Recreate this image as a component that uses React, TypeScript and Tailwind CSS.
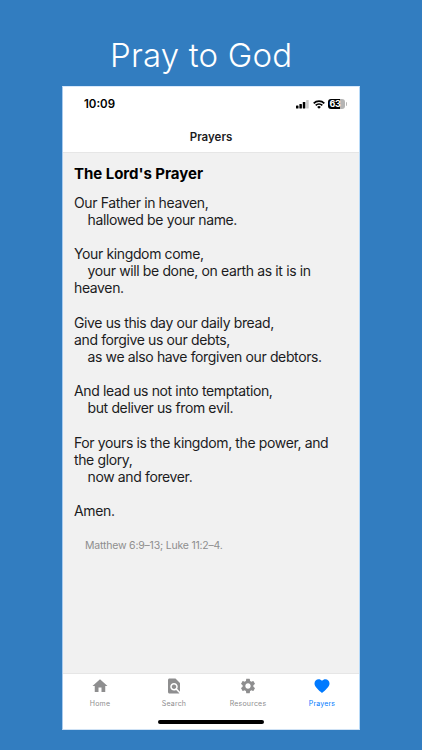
import React from "react"
import { MdHome, MdFindInPage, MdSettings, MdFavorite } from "react-icons/md"

interface Line {
  text: string
  indent?: boolean
}

const stanzas: Line[][] = [
  [{ text: "Our Father in heaven," }, { text: "hallowed be your name.", indent: true }],
  [
    { text: "Your kingdom come," },
    { text: "your will be done, on earth as it is in", indent: true },
    { text: "heaven." },
  ],
  [
    { text: "Give us this day our daily bread," },
    { text: "and forgive us our debts," },
    { text: "as we also have forgiven our debtors.", indent: true },
  ],
  [{ text: "And lead us not into temptation," }, { text: "but deliver us from evil.", indent: true }],
  [
    { text: "For yours is the kingdom, the power, and" },
    { text: "the glory," },
    { text: "now and forever.", indent: true },
  ],
  [{ text: "Amen." }],
]

const tabs = [
  { label: "Home", icon: MdHome },
  { label: "Search", icon: MdFindInPage },
  { label: "Resources", icon: MdSettings },
  { label: "Prayers", icon: MdFavorite, active: true },
]

function StatusBar() {
  return (
    <div className="flex h-[34px] items-center justify-between pl-[21px] pr-[12px]">
      <span className="text-[11.5px] font-semibold leading-4 text-black">10:09</span>
      <div className="flex items-center">
        <svg width="13" height="9" viewBox="0 0 13 9" className="mr-[4px]">
          <rect x="0" y="5.5" width="2.5" height="3" rx="0.6" />
          <rect x="3.4" y="4" width="2.5" height="4.5" rx="0.6" />
          <rect x="6.8" y="2" width="2.5" height="6.5" rx="0.6" />
          <rect x="10.2" y="0" width="2.5" height="8.5" rx="0.6" fill="#c9c9c9" />
        </svg>
        <svg width="12" height="9" viewBox="0 0 12 9" className="mr-[3px]" fill="none" stroke="#000" strokeWidth="1.7">
          <path d="M0.7 3.3a7.4 7.4 0 0 1 10.6 0" />
          <path d="M2.7 5.4a4.6 4.6 0 0 1 6.6 0" />
          <path d="M6 8.8 4.1 6.9a2.7 2.7 0 0 1 3.8 0z" fill="#000" stroke="none" />
        </svg>
        <div className="flex h-[10px] w-[17px] items-center rounded-[3px] bg-linear-to-r from-black from-68% to-[#b5b5b5] to-68% pl-[2px] text-[9px] font-bold leading-[10px] tracking-[-0.3px] text-white">
          63
        </div>
        <div className="ml-px h-[4px] w-[1.5px] rounded-r-full bg-[#b5b5b5]" />
      </div>
    </div>
  )
}

export default function App() {
  return (
    <div className="flex h-[750px] w-[422px] flex-col overflow-hidden bg-[#327dc0] font-['Inter',sans-serif]">
      <h1 className="h-[86px] pl-[110px] pt-[35px] text-[33px] font-light leading-[40px] tracking-[0.2px] whitespace-nowrap text-white">
        Pray to God
      </h1>

      <div className="ml-[62px] flex h-[644px] w-[298px] flex-col border border-t-[#d8e9fb] border-r-[#b8daf8] border-b-[#cfe2f5] border-l-[#a9cbee] bg-white">
        <StatusBar />
        <header className="flex h-[32px] items-center justify-center border-b border-[#e6e6e6] text-[11.5px] font-semibold leading-4 text-[#1c1c1e]">
          Prayers
        </header>

        <main className="flex-1 bg-[#f1f1f1] pl-[11px] pt-[11px]">
          <h2 className="mb-[9.5px] text-[15px] font-bold leading-5 tracking-[-0.03px] text-black">The Lord's Prayer</h2>
          <div className="space-y-[17.15px] whitespace-nowrap text-[14px] leading-[17.15px] tracking-[-0.37px] text-[#1c1c1e]">
            {stanzas.map((lines, i) => (
              <div key={i}>
                {lines.map((line) => (
                  <p key={line.text} className={line.indent ? "pl-[13.5px]" : ""}>
                    {line.text}
                  </p>
                ))}
              </div>
            ))}
          </div>
          <p className="mt-[18.5px] pl-[11px] text-[10.5px] leading-4 tracking-[-0.2px] text-[#8e8e8e]">
            Matthew 6:9–13; Luke 11:2–4.
          </p>
        </main>

        <nav className="h-[56px] border-t border-[#e6e6e6]">
          <div className="grid h-[44px] grid-cols-4">
            {tabs.map(({ label, icon: Icon, active }) => (
              <div
                key={label}
                className={`flex flex-col items-center pt-[3px] ${active ? "text-[#007aff]" : "text-[#8e8e8f]"}`}
              >
                <Icon size={18} />
                <span className="mt-[4px] text-[7px] leading-[10px] tracking-[0.2px]">{label}</span>
              </div>
            ))}
          </div>
          <div className="mx-auto mt-[2px] h-[4px] w-[106px] rounded-full bg-black" />
        </nav>
      </div>
    </div>
  )
}
